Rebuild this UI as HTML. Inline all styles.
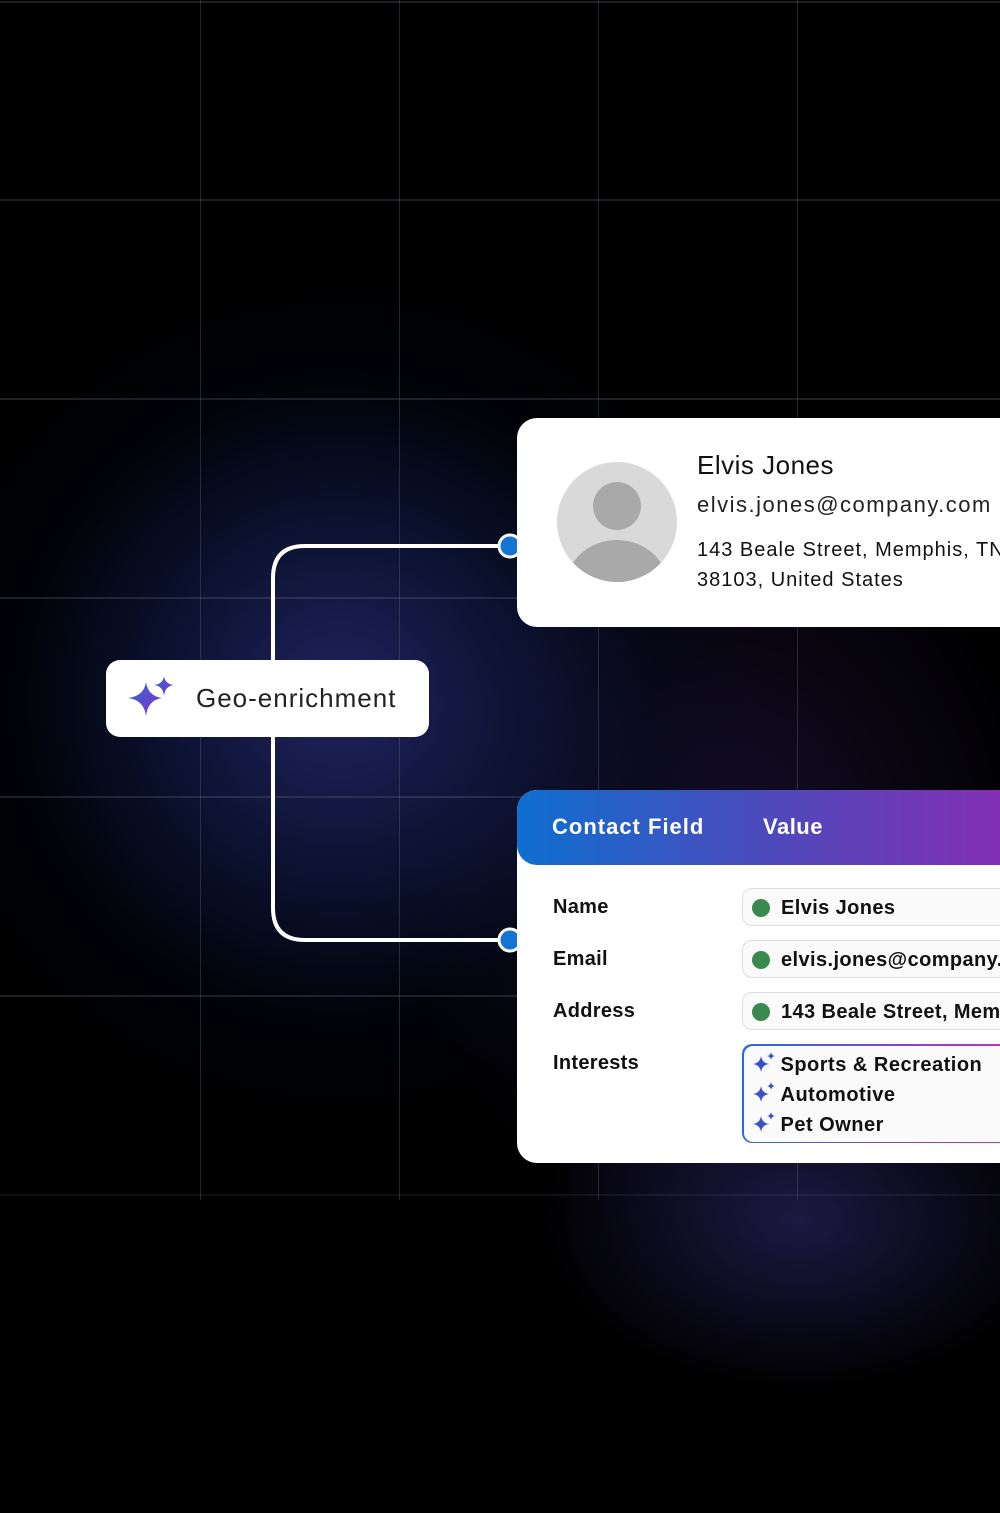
<!DOCTYPE html>
<html><head><meta charset="utf-8"><style>
*{margin:0;padding:0;box-sizing:border-box}
body{width:1000px;height:1513px;background:#000;position:relative;overflow:hidden;font-family:"Liberation Sans",sans-serif}
.bg{position:absolute;inset:0;background:
radial-gradient(ellipse 420px 420px at 340px 700px,rgba(40,44,120,.8),rgba(18,30,80,.55) 45%,rgba(5,10,30,.3) 75%,rgba(0,0,0,0) 100%),
radial-gradient(ellipse 260px 170px at 800px 1220px,rgba(50,45,120,.55),rgba(0,0,0,0) 100%),
radial-gradient(ellipse 320px 380px at 720px 860px,rgba(55,35,110,.4),rgba(0,0,0,0) 100%)}
.v{position:absolute;top:0;height:1200px;width:1px;background:rgba(120,120,140,.3)}
.h{position:absolute;left:0;width:1000px;height:2px;background:rgba(120,120,140,.25)}
.card{position:absolute;background:#fff}
.pill{position:absolute;left:742px;width:270px;height:38px;border:1px solid #ddd;border-radius:10px;background:#fafafa;font-weight:bold;font-size:20px;letter-spacing:.4px;color:#111;padding:8px 0 0 38px}
.pill:before{content:"";position:absolute;left:9px;top:10px;width:18px;height:18px;border-radius:50%;background:#3a8a50}
.lbl{position:absolute;left:553px;font-weight:bold;font-size:20px;letter-spacing:.3px;color:#111}
</style></head><body>
<div class="bg"></div>
<div class="v" style="left:200px"></div><div class="v" style="left:399px"></div><div class="v" style="left:598px"></div><div class="v" style="left:797px"></div>
<div class="h" style="top:1px"></div><div class="h" style="top:199px"></div><div class="h" style="top:398px"></div><div class="h" style="top:597px"></div><div class="h" style="top:796px"></div><div class="h" style="top:995px"></div><div class="h" style="top:1194px;opacity:.5"></div>
<svg style="position:absolute;left:0;top:0" width="1000" height="1513">
<path d="M510 546 H305 Q273 546 273 578 V908 Q273 940 305 940 H510" fill="none" stroke="#fff" stroke-width="4"/>
<circle cx="510" cy="546" r="11" fill="#1474d4" stroke="#fff" stroke-width="3"/>
<circle cx="510" cy="940" r="11" fill="#1474d4" stroke="#fff" stroke-width="3"/>
</svg>
<div class="card" style="left:106px;top:660px;width:323px;height:77px;border-radius:14px">
<svg style="position:absolute;left:20px;top:16px" width="52" height="48" viewBox="0 0 52 48"><defs><linearGradient id="g" x1="0" y1="0" x2="1" y2="1"><stop offset="0" stop-color="#2a6ad8"/><stop offset="1" stop-color="#8a30c0"/></linearGradient></defs>
<path d="M20 6 Q22 20 36 22 Q22 24 20 40 Q18 24 2 22 Q18 20 20 6Z" fill="url(#g)"/>
<path d="M38 0 Q39 8 48 9 Q39 10 38 20 Q37 10 28 9 Q37 8 38 0Z" fill="url(#g)"/></svg>
<div style="position:absolute;left:90px;top:23px;font-size:26px;letter-spacing:1px;color:#222">Geo-enrichment</div>
</div>
<div class="card" style="left:517px;top:418px;width:520px;height:209px;border-radius:20px">
<svg style="position:absolute;left:40px;top:44px" width="120" height="120"><defs><clipPath id="c"><circle cx="60" cy="60" r="60"/></clipPath></defs><circle cx="60" cy="60" r="60" fill="#d9d9d9"/><circle cx="60" cy="44" r="24" fill="#a9a9a9"/><ellipse cx="60" cy="122" rx="50" ry="44" fill="#a9a9a9" clip-path="url(#c)"/></svg>
<div style="position:absolute;left:180px;top:32px;font-size:26px;letter-spacing:.5px;color:#111">Elvis Jones</div>
<div style="position:absolute;left:180px;top:74px;font-size:22px;letter-spacing:1.5px;color:#222">elvis.jones@company.com</div>
<div style="position:absolute;left:180px;top:117px;font-size:20px;letter-spacing:1px;color:#111;line-height:30px;white-space:nowrap">143 Beale Street, Memphis, TN<br>38103, United States</div>
</div>
<div class="card" style="left:517px;top:790px;width:520px;height:373px;border-radius:20px;overflow:hidden">
<div style="height:75px;border-radius:20px;background:linear-gradient(90deg,#0e6fd0,#4a4cbc 45%,#8a2bb4)"></div>
<div style="position:absolute;left:35px;top:24px;font-weight:bold;font-size:22px;letter-spacing:1px;color:#fff">Contact Field</div>
<div style="position:absolute;left:246px;top:24px;font-weight:bold;font-size:22px;letter-spacing:.5px;color:#fff">Value</div>
</div>
<div class="lbl" style="top:896px">Name</div>
<div class="lbl" style="top:948px">Email</div>
<div class="lbl" style="top:1000px">Address</div>
<div class="lbl" style="top:1052px">Interests</div>
<div class="pill" style="top:888px;white-space:nowrap">Elvis Jones</div>
<div class="pill" style="top:940px;white-space:nowrap">elvis.jones@company.com</div>
<div class="pill" style="top:992px;white-space:nowrap">143 Beale Street, Memphis</div>
<div style="position:absolute;left:742px;top:1044px;width:270px;height:99px;border-radius:10px;padding:1.5px;background:linear-gradient(90deg,#2a6ad8,#c030c0)">
<div style="background:#fafafa;width:100%;height:100%;border-radius:9px;font-weight:bold;font-size:20px;letter-spacing:.5px;color:#111;line-height:30px;padding:4px 0 0 37px;white-space:nowrap;position:relative">
Sports &amp; Recreation<br>Automotive<br>Pet Owner
<svg style="position:absolute;left:9px;top:6px" width="24" height="90" viewBox="0 0 24 90"><g fill="#3a50c8"><path id="s" d="M8 4 Q9 11 16 12 Q9 13 8 20 Q7 13 0 12 Q7 11 8 4Z"/><path d="M18 0 Q18.5 3.5 22 4 Q18.5 4.5 18 8 Q17.5 4.5 14 4 Q17.5 3.5 18 0Z"/>
<use href="#s" y="30"/><path d="M18 30 Q18.5 33.5 22 34 Q18.5 34.5 18 38 Q17.5 34.5 14 34 Q17.5 33.5 18 30Z"/>
<use href="#s" y="60"/><path d="M18 60 Q18.5 63.5 22 64 Q18.5 64.5 18 68 Q17.5 64.5 14 64 Q17.5 63.5 18 60Z"/></g></svg>
</div></div>
</body></html>
